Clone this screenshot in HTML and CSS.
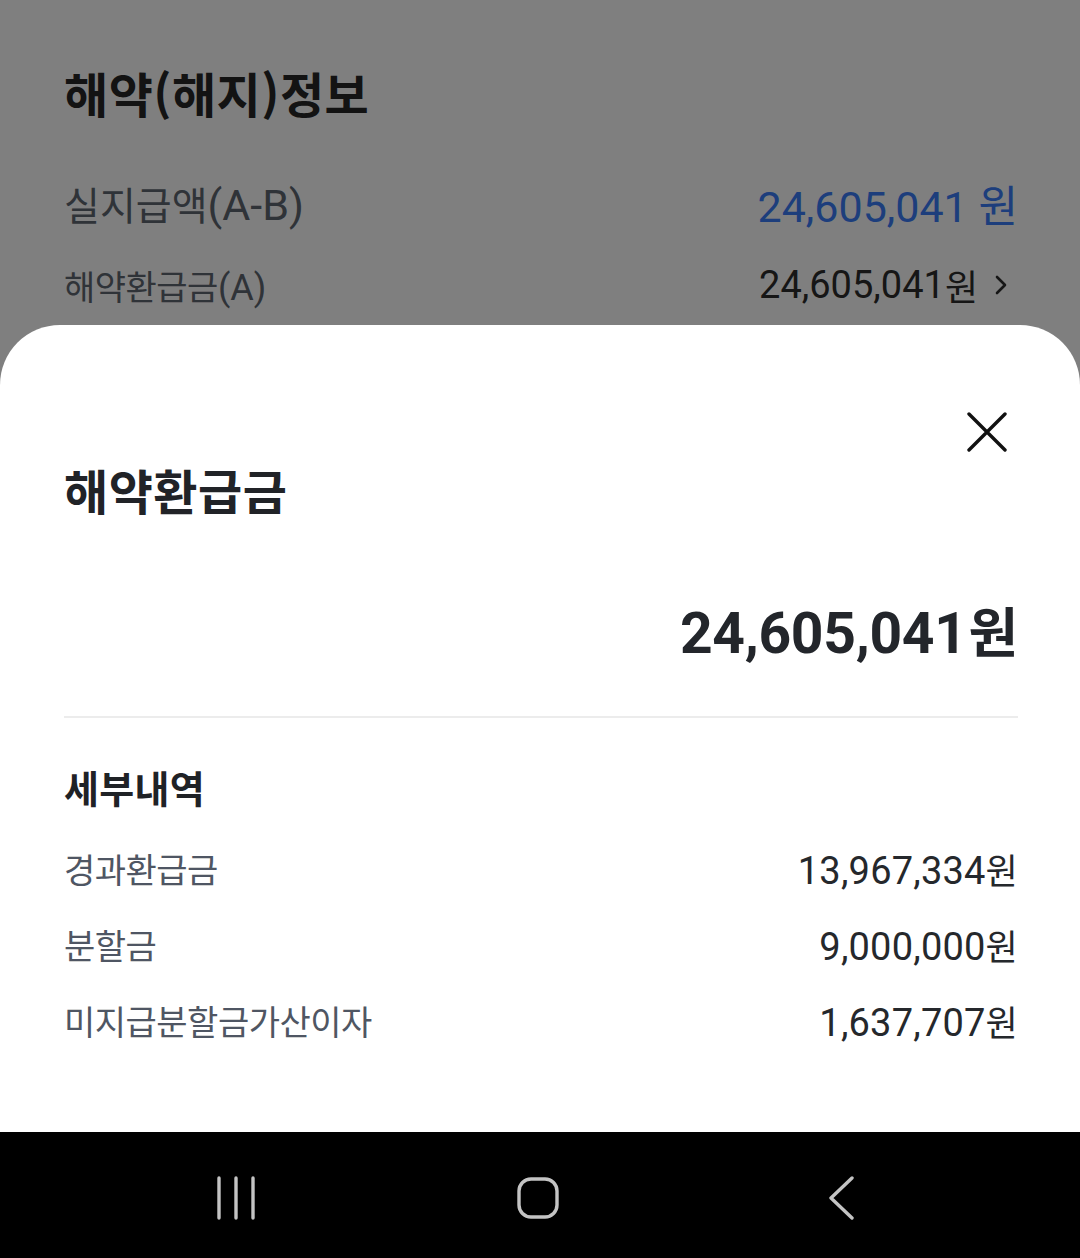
FILE: index.html
```html
<!DOCTYPE html>
<html lang="ko">
<head>
    <meta charset="UTF-8">
    <meta name="viewport" content="width=device-width, initial-scale=1.0">
    <title>해약환급금</title>
    <link rel="stylesheet" href="styles.css">
</head>
<body>
    <div class="screen">
        <div class="stage">
            <!-- 배경 화면 -->
            <section class="info">
                <h1 class="info-title">해약(해지)정보</h1>
                <div class="info-row main">
                    <span class="label">실지급액<span class="latin">(A-B)</span></span>
                    <span class="value blue">24,605,041 원</span>
                </div>
                <div class="info-row">
                    <span class="label">해약환급금<span class="latin">(A)</span></span>
                    <span class="value">24,605,041<span class="won">원</span>
                        <svg class="chev" viewBox="0 0 14 24" width="14" height="24"><path d="M3 4 L11 12 L3 20" fill="none" stroke="currentColor" stroke-width="2.6" stroke-linecap="round" stroke-linejoin="round"/></svg>
                    </span>
                </div>
                <div class="info-row">
                    <span class="label">해지공제금<span class="latin">(B)</span></span>
                    <span class="value">0<span class="won">원</span></span>
                </div>
            </section>

            <div class="scrim"></div>

            <!-- 바텀시트 -->
            <div class="sheet">
                <div class="sheet-top">
                    <button class="close-btn" aria-label="닫기">
                        <svg viewBox="0 0 40 40" width="40" height="40"><path d="M2 2 L38 38 M38 2 L2 38" fill="none" stroke="#111" stroke-width="3.4" stroke-linecap="round"/></svg>
                    </button>
                </div>
                <h2 class="sheet-title">해약환급금</h2>
                <div class="total">24,605,041<span class="won">원</span></div>
                <hr class="divider">
                <h3 class="detail-title">세부내역</h3>
                <div class="detail-row">
                    <span class="d-label">경과환급금</span>
                    <span class="d-value">13,967,334<span class="won">원</span></span>
                </div>
                <div class="detail-row">
                    <span class="d-label">분할금</span>
                    <span class="d-value">9,000,000<span class="won">원</span></span>
                </div>
                <div class="detail-row">
                    <span class="d-label">미지급분할금가산이자</span>
                    <span class="d-value">1,637,707<span class="won">원</span></span>
                </div>
            </div>
        </div>

        <!-- 내비게이션 바 -->
        <nav class="navbar">
            <svg class="nav-icon" viewBox="0 0 40 44" width="40" height="44"><path d="M3 2 V42 M20 2 V42 M37 2 V42" stroke="#c4c4c4" stroke-width="3.4" stroke-linecap="round"/></svg>
            <svg class="nav-icon" viewBox="0 0 42 42" width="42" height="42"><rect x="2" y="2" width="38" height="38" rx="12" fill="none" stroke="#c4c4c4" stroke-width="3.4"/></svg>
            <svg class="nav-icon back" viewBox="0 0 28 44" width="28" height="44"><path d="M24 2 L3 22 L24 42" fill="none" stroke="#c4c4c4" stroke-width="3.4" stroke-linecap="round" stroke-linejoin="round"/></svg>
        </nav>
    </div>
</body>
</html>
```

FILE: styles.css
```css
body {
    margin: 0;
    padding: 0;
    font-family: Roboto, "Noto Sans CJK KR", sans-serif;
    background: #000;
}

.screen {
    width: 1080px;
    height: 1258px;
    display: flex;
    flex-direction: column;
    overflow: hidden;
}

.stage {
    flex: 1;
    position: relative;
    background: white;
    overflow: hidden;
}

/* 배경 화면 */
.info {
    padding: 62px 62px 0 64px;
}

.info-title {
    margin: 0 0 64px 0;
    font-family: "Noto Sans CJK KR", sans-serif;
    font-size: 48px;
    line-height: 60px;
    font-weight: bold;
    letter-spacing: 0.5px;
    color: #262626;
}

.info-row {
    display: flex;
    justify-content: space-between;
    align-items: center;
    height: 82px;
}

.info-row.main {
    margin-top: -24px;
}

.label {
    font-family: "Noto Sans CJK KR", sans-serif;
    font-size: 34px;
    letter-spacing: -0.5px;
    color: #5e6670;
}

.label .latin {
    font-family: Roboto, sans-serif;
    font-size: 36px;
    letter-spacing: 0;
}

.main .label {
    font-size: 39px;
    letter-spacing: 0;
}

.main .label .latin {
    font-size: 43px;
}

.value {
    display: flex;
    align-items: center;
    font-size: 38px;
    color: #2c2c2c;
}

.value .won {
    font-size: 36px;
}

.value.blue {
    font-size: 43px;
    color: #3a7df8;
}

.chev {
    color: #2c2c2c;
    margin: 0 10px 0 16px;
}

.scrim {
    position: absolute;
    top: 0;
    left: 0;
    right: 0;
    bottom: 0;
    background: rgba(0,0,0,0.5);
}

/* 바텀시트 */
.sheet {
    position: absolute;
    top: 325px;
    left: 0;
    right: 0;
    bottom: 0;
    background: white;
    border-radius: 60px 60px 0 0;
    padding: 80px 62px 0 64px;
}

.sheet-top {
    display: flex;
    justify-content: flex-end;
    height: 52px;
}

.close-btn {
    background: none;
    border: none;
    padding: 0;
    width: 40px;
    height: 40px;
    margin: 7px 11px 0 0;
    cursor: pointer;
}

.sheet-title {
    margin: 2px 0 0 0;
    font-family: "Noto Sans CJK KR", sans-serif;
    font-size: 48px;
    line-height: 60px;
    font-weight: bold;
    letter-spacing: 0.5px;
    color: #212327;
}

.total {
    margin-top: 77px;
    text-align: right;
    font-size: 57px;
    line-height: 68px;
    font-weight: bold;
    letter-spacing: -0.3px;
    color: #23262b;
}

.total .won {
    font-size: 54px;
    margin-left: 2px;
}

.divider {
    margin: 48px 0 0 0;
    border: none;
    height: 2px;
    background: #ececec;
}

.detail-title {
    margin: 44px 0 18px 0;
    font-family: "Noto Sans CJK KR", sans-serif;
    font-size: 38px;
    line-height: 50px;
    font-weight: bold;
    letter-spacing: 0.3px;
    color: #1f2226;
}

.detail-row {
    display: flex;
    justify-content: space-between;
    align-items: center;
    height: 76px;
}

.d-label {
    font-family: "Noto Sans CJK KR", sans-serif;
    font-size: 34px;
    letter-spacing: -0.5px;
    color: #4f5663;
}

.d-value {
    font-size: 38px;
    letter-spacing: 0.2px;
    color: #25282c;
}

.won {
    font-family: "Noto Sans CJK KR", sans-serif;
    font-size: 35px;
}

/* 내비게이션 바 */
.navbar {
    height: 126px;
    background: #000;
    display: flex;
    justify-content: center;
    align-items: center;
    gap: 261px;
    padding: 6px 8px 0 0;
    box-sizing: border-box;
}

.nav-icon.back {
    margin-left: 8px;
}
```
